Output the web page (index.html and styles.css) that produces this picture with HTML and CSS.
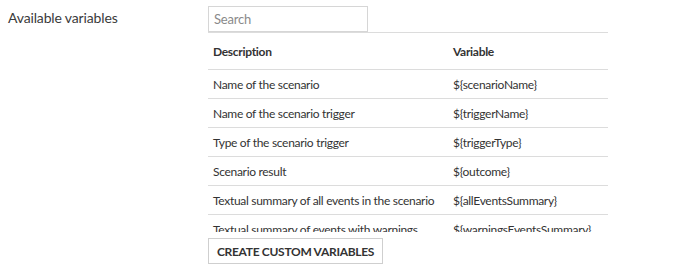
FILE: index.html
```html
<!DOCTYPE html>
<html lang="en">
    <head>
        <meta charset="UTF-8">
        <meta name="viewport" content="width=device-width, initial-scale=1.0">
        <title>Available variables</title>
        <link rel="stylesheet" href="styles.css">
    </head>
    <body>
        <div class="field">
            <div class="field-label">Available variables</div>
            <div class="field-body">
                <input type="text" class="search" placeholder="Search"/>
                <div class="vars-scroll">
                    <table class="vars-table">
                        <thead>
                            <tr>
                                <th class="col-desc">Description</th>
                                <th>Variable</th>
                            </tr>
                        </thead>
                        <tbody>
                            <tr><td>Name of the scenario</td><td>${scenarioName}</td></tr>
                            <tr><td>Name of the scenario trigger</td><td>${triggerName}</td></tr>
                            <tr><td>Type of the scenario trigger</td><td>${triggerType}</td></tr>
                            <tr><td>Scenario result</td><td>${outcome}</td></tr>
                            <tr><td>Textual summary of all events in the scenario</td><td>${allEventsSummary}</td></tr>
                            <tr><td>Textual summary of events with warnings</td><td>${warningsEventsSummary}</td></tr>
                            <tr><td>Textual summary of events with errors</td><td>${errorsEventsSummary}</td></tr>
                        </tbody>
                    </table>
                </div>
                <button class="btn">CREATE CUSTOM VARIABLES</button>
            </div>
        </div>
    </body>
</html>
```

FILE: styles.css
```css
body {
    margin: 0;
    font-family: Lato, "Liberation Sans", sans-serif;
    font-size: 12px;
    letter-spacing: -0.3px;
    color: #333;
    background: #fff;
}

.field {
    display: flex;
    padding: 6px 8px 0 8px;
}

.field-label {
    width: 200px;
    font-size: 14px;
    letter-spacing: -0.15px;
    line-height: 24px;
    color: #3a3a3a;
}

.field-body {
    width: 400px;
}

.search {
    display: block;
    box-sizing: border-box;
    width: 160px;
    height: 26px;
    margin: 0;
    padding: 0 5px;
    border: 1px solid #d6d6d6;
    font-family: inherit;
    font-size: 13px;
    letter-spacing: -0.2px;
    color: #333;
    outline: none;
}

.search::placeholder {
    color: #8a8a8a;
}

/* table clipped, scrolls inside */
.vars-scroll {
    height: 200px;
    overflow: hidden;
}

.vars-table {
    width: 100%;
    table-layout: fixed;
    border-collapse: collapse;
    border-top: 1px solid #dcdcdc;
}

.vars-table th,
.vars-table td {
    text-align: left;
    padding: 0 5px;
    border-bottom: 1px solid #dcdcdc;
    white-space: nowrap;
    overflow: hidden;
}

.vars-table th {
    height: 36px;
    font-weight: bold;
    color: #333;
}

.vars-table td {
    height: 28px;
}

.col-desc {
    width: 230px;
}

.btn {
    display: block;
    margin-top: 6px;
    height: 26px;
    width: 175px;
    padding: 0;
    border: 1px solid #cfcfcf;
    background: #fff;
    font-family: inherit;
    font-size: 12px;
    letter-spacing: -0.3px;
    font-weight: bold;
    white-space: nowrap;
    color: #333;
}
```
